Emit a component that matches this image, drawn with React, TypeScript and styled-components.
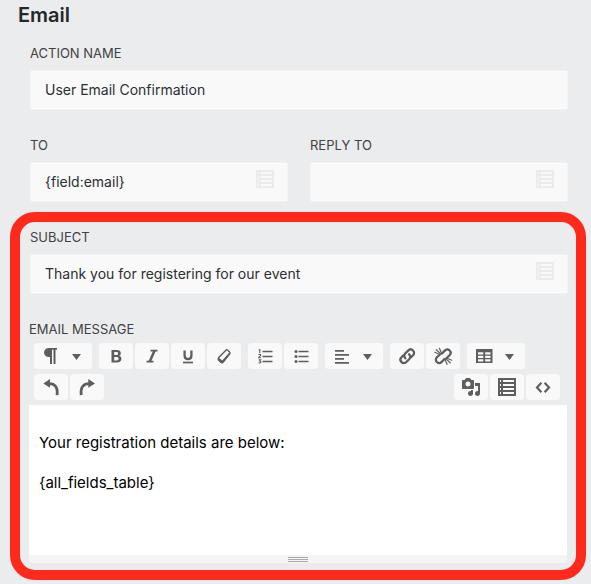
import React from 'react';
import styled, { createGlobalStyle } from 'styled-components';

const GlobalStyle = createGlobalStyle`
  *, *::before, *::after { box-sizing: border-box; }
  body {
    margin: 0;
    background: #ebecee;
    color: #2b2f33;
    font-family: Inter, "Liberation Sans", sans-serif;
  }
`;

const Page = styled.main`
  padding: 3px 5px 4px 10px;
`;

const Title = styled.h1`
  margin: 0 0 17px 8px;
  font-size: 20px;
  line-height: 24px;
  font-weight: 600;
  color: #23282d;
`;

const Fields = styled.div`
  display: grid;
  grid-template-columns: 1fr 1fr;
  gap: 26px 22px;
  margin: 0 18px 10px 20px;
`;

const Field = styled.div<{ $wide?: boolean }>`
  display: flex;
  flex-direction: column;
  gap: 8px;
  min-width: 0;
  grid-column: ${(p) => (p.$wide ? '1 / -1' : 'auto')};
`;

const Label = styled.label`
  font-size: 13px;
  line-height: 18px;
  color: #424242;
`;

const InputBox = styled.div`
  display: flex;
  height: 40px;
  padding: 0 13px 2px 14px;
  background: #f9f9f9;
  border: 1px solid #f4f4f5;
  border-radius: 2px;
`;

const TextInput = styled.input`
  flex: 1;
  min-width: 0;
  padding: 0;
  border: 0;
  outline: 0;
  background: transparent;
  color: #2b2f33;
  font: inherit;
  font-size: 14px;
`;

const MergeTagButton = styled.button`
  display: flex;
  align-self: flex-start;
  margin-top: 7px;
  padding: 0;
  border: 0;
  background: transparent;
  color: #ebebeb;
`;

const Highlight = styled.section`
  padding: 6px 8px 7px 9px;
  border: 10px solid #ff2a1c;
  border-radius: 25px;
`;

const SubjectField = styled(Field)`
  margin: 0 0 26px 1px;
`;

const MessageLabel = styled(Label)`
  display: block;
  margin-bottom: 5px;
`;

const Toolbar = styled.div`
  display: flex;
  flex-wrap: wrap;
  gap: 5px 7px;
  padding: 0 8px 5px 5px;
`;

const Group = styled.div<{ $end?: boolean }>`
  display: flex;
  gap: 2px;
  margin-left: ${(p) => (p.$end ? 'auto' : '0')};
`;

const ToolButton = styled.button<{ $menu?: boolean }>`
  display: flex;
  align-items: center;
  justify-content: center;
  gap: 5px;
  width: ${(p) => (p.$menu ? '58px' : '34px')};
  height: 26px;
  padding: 0;
  border: 0;
  border-radius: 4px;
  background: #f9f9f9;
  color: #5e5e5e;
`;

const Icon = styled.svg`
  display: block;
  flex: none;
  fill: none;
  stroke: none;
`;

const Editor = styled.div`
  margin-right: 1px;
`;

const Message = styled.div`
  min-height: 150px;
  padding: 28px 10px 10px;
  background: #fff;
  color: #000;
  font-size: 15px;
  line-height: 20px;
  outline: 0;
`;

const Paragraph = styled.p`
  margin: 0 0 20px;
`;

const ResizeBar = styled.div`
  display: flex;
  flex-direction: column;
  align-items: center;
  gap: 1px;
  height: 8px;
  padding-top: 2px;
  background: #f5f5f5;
  border-radius: 0 0 4px 4px;
`;

const GripLine = styled.span`
  width: 20px;
  height: 1px;
  background: #a9a9a9;
`;

const ListIcon = () => (
  <Icon width="18" height="18" viewBox="0 0 18 18" shapeRendering="crispEdges">
    <path fill="currentColor" fillRule="evenodd" d="M0 0h18v18H0zM2 2v2h1V2zM5 2v2h11V2zM2 6v2h1V6zM5 6v2h11V6zM2 10v2h1v-2zM5 10v2h11v-2zM2 14v2h1v-2zM5 14v2h11v-2z" />
  </Icon>
);

const Caret = () => (
  <Icon width="20" height="20" viewBox="0 0 20 20">
    <path fill="currentColor" d="M6 8h9l-4.500 6z" />
  </Icon>
);

const icons: Record<string, React.ReactNode> = {
  paragraph: <path fill="currentColor" d="M16 2v1.700h-1.500V18h-2V3.700H11V18H9v-7H8C5 11 3 9 3 6.500S5 2 8 2z" />,
  bold: <path fill="currentColor" fillRule="evenodd" d="M5.500 4h5.200c2.600 0 4.100 1.200 4.100 3.200 0 1.300-.7 2.200-1.800 2.600 1.500.4 2.400 1.500 2.400 3 0 2.400-1.700 3.700-4.500 3.700H5.500zM8.200 6.100v2.900h2c1.200 0 1.900-.5 1.900-1.500s-.7-1.400-1.900-1.400zM8.200 11v3.400h2.300c1.400 0 2.100-.6 2.100-1.700S11.800 11 10.500 11z" />,
  italic: (
    <g stroke="currentColor" strokeWidth="1.700">
      <path d="M8.500 4.600h7M4.500 15.600h7" />
      <path strokeWidth="2.500" d="M12.600 4.500l-4.800 11" />
    </g>
  ),
  underline: (
    <g stroke="currentColor">
      <path strokeWidth="2.300" d="M6.600 4.500v5c0 2.400 1.100 3.600 3.400 3.600s3.400-1.200 3.400-3.600v-5" />
      <path strokeWidth="1.700" d="M5 16.500h10" />
    </g>
  ),
  eraser: (
    <g stroke="currentColor" strokeLinejoin="round">
      <path strokeWidth="1.400" d="M11.700 4.400q1-1 2-.2l1.700 1.500q1 1 .2 2l-6.400 7.600q-1 1-2 .2l-2.300-2q-1-1-.2-2z" />
      <path fill="currentColor" strokeWidth="1" d="M4.400 12.200l4 2.700 7.200-8 .4 1-6.700 8.600q-1.200 1.100-2.400.2L4.500 14.600q-1-1-.1-2.400z" />
    </g>
  ),
  ordered: (
    <g stroke="currentColor">
      <path strokeWidth="1.400" d="M7.500 5.500h10M7.500 10.500h10M7.500 15.500h10" />
      <path strokeWidth="1.100" d="M3.800 4.200l1-.6v3.500M3.600 8.900c.5-1 2.300-.8 2.100.4-.1.800-1.300 1.100-2 2.400h2.200M3.700 13.700h1.900l-.9 1.200c1.800.1 1.500 2.200-.1 2.100l-1-.3" />
    </g>
  ),
  unordered: (
    <g stroke="currentColor">
      <path strokeWidth="1.400" d="M7.500 5.500h10M7.500 10.500h10M7.500 15.500h10" />
      <g fill="currentColor" stroke="none">
        <circle cx="5" cy="5.500" r="1.500" />
        <circle cx="5" cy="10.500" r="1.500" />
        <circle cx="5" cy="15.500" r="1.500" />
      </g>
    </g>
  ),
  align: <path fill="currentColor" d="M3 4h9v1.800H3zM3 8h14v1.800H3zM3 12h9v1.800H3zM3 16h14v1.800H3z" />,
  link: (
    <g stroke="currentColor" strokeWidth="2.300" strokeLinecap="round">
      <path d="M8.400 12.300c-1.600-1.400-1.500-3.500 0-5l2.700-2.700c1.500-1.500 3.500-1.500 4.900-.1s1.400 3.400 0 4.800l-1.900 1.900" />
      <path d="M12.100 8.300c1.600 1.400 1.500 3.500 0 5L9.400 16c-1.500 1.500-3.500 1.500-4.900.1s-1.400-3.400 0-4.800l1.900-1.900" />
    </g>
  ),
  unlink: (
    <g stroke="currentColor" strokeLinecap="round">
      <path strokeWidth="2.300" d="M9 7.500l2.800-2.900c1.500-1.500 3.400-1.500 4.800-.1s1.400 3.300 0 4.700l-2.400 2.300M11.500 13l-2.800 2.900c-1.500 1.500-3.400 1.500-4.800.1s-1.400-3.300 0-4.700l2.400-2.300" />
      <path strokeWidth="1.200" d="M1.800 6.300l5.700 2.400M3.300 3.700l4.700 4.400M6.400 2.200L8.500 7M18.700 14.200l-5.700-2.400M17.200 16.800l-4.700-4.400M14.100 18.300L12 13.500" />
    </g>
  ),
  table: <path fill="currentColor" fillRule="evenodd" d="M2 3h16.500v14H2zM4 6.200v2.300h5.300V6.200zM11.200 6.200v2.300h5.300V6.200zM4 9.700V12h5.300V9.700zM11.200 9.700V12h5.300V9.700zM4 13.200v2.300h5.300v-2.300zM11.200 13.200v2.300h5.300v-2.300z" />,
  undo: (
    <g>
      <path fill="currentColor" d="M2.300 6.600L9 2v8.800z" />
      <path stroke="currentColor" strokeWidth="2.800" d="M8 6.700c6.200 0 9 3.800 8.100 11.500" />
    </g>
  ),
  redo: (
    <g>
      <path fill="currentColor" d="M18 6.600L11.300 2v8.800z" />
      <path stroke="currentColor" strokeWidth="2.800" d="M12.300 6.700c-6.200 0-9 3.800-8.100 11.500" />
    </g>
  ),
  media: <path fill="currentColor" d="M13 11V4c0-.55-.45-1-1-1h-1.670L9 1H5L3.670 3H2c-.55 0-1 .45-1 1v7c0 .55.45 1 1 1h10c.55 0 1-.45 1-1zM7 4.500c1.380 0 2.500 1.120 2.500 2.500S8.380 9.500 7 9.500 4.500 8.380 4.500 7 5.620 4.500 7 4.500zM14 6h5v10.500c0 1.380-1.120 2.500-2.500 2.500S14 17.880 14 16.500s1.120-2.500 2.500-2.500c.17 0 .34.020.5.050V9h-3V6zm-4 8.050V13h2v3.500c0 1.380-1.120 2.500-2.500 2.500S7 17.880 7 16.500 8.120 14 9.500 14c.17 0 .34.020.5.050z" />,
  code: <path stroke="currentColor" strokeWidth="2.200" d="M8.400 5.800L4 10.500l4.400 4.700M11.600 5.800l4.400 4.700-4.400 4.700" />,
};

type ToolProps = { name: string; label: string; menu?: boolean };

const Tool = ({ name, label, menu }: ToolProps) => (
  <ToolButton type="button" aria-label={label} aria-haspopup={menu ? 'menu' : undefined} $menu={menu}>
    {name === 'fields' ? (
      <ListIcon />
    ) : (
      <Icon width="20" height="20" viewBox="0 0 20 20">
        {icons[name]}
      </Icon>
    )}
    {menu && <Caret />}
  </ToolButton>
);

type TextFieldProps = { id: string; value: string; tags?: boolean };

const TextField = ({ id, value, tags }: TextFieldProps) => (
  <InputBox>
    <TextInput id={id} type="text" defaultValue={value} />
    {tags && (
      <MergeTagButton type="button" aria-label="Insert merge tag">
        <ListIcon />
      </MergeTagButton>
    )}
  </InputBox>
);

export default function App() {
  return (
    <>
      <GlobalStyle />
      <Page>
        <Title>Email</Title>
        <Fields>
          <Field $wide>
            <Label htmlFor="action-name">ACTION NAME</Label>
            <TextField id="action-name" value="User Email Confirmation" />
          </Field>
          <Field>
            <Label htmlFor="to">TO</Label>
            <TextField id="to" value="{field:email}" tags />
          </Field>
          <Field>
            <Label htmlFor="reply-to">REPLY TO</Label>
            <TextField id="reply-to" value="" tags />
          </Field>
        </Fields>
        <Highlight>
          <SubjectField>
            <Label htmlFor="subject">SUBJECT</Label>
            <TextField id="subject" value="Thank you for registering for our event" tags />
          </SubjectField>
          <MessageLabel as="div" id="message-label">EMAIL MESSAGE</MessageLabel>
          <Toolbar role="toolbar" aria-label="Formatting">
            <Group>
              <Tool name="paragraph" label="Paragraph style" menu />
            </Group>
            <Group>
              <Tool name="bold" label="Bold" />
              <Tool name="italic" label="Italic" />
              <Tool name="underline" label="Underline" />
              <Tool name="eraser" label="Remove formatting" />
            </Group>
            <Group>
              <Tool name="ordered" label="Ordered list" />
              <Tool name="unordered" label="Unordered list" />
            </Group>
            <Group>
              <Tool name="align" label="Alignment" menu />
            </Group>
            <Group>
              <Tool name="link" label="Link" />
              <Tool name="unlink" label="Unlink" />
            </Group>
            <Group>
              <Tool name="table" label="Table" menu />
            </Group>
            <Group>
              <Tool name="undo" label="Undo" />
              <Tool name="redo" label="Redo" />
            </Group>
            <Group $end>
              <Tool name="media" label="Insert media" />
              <Tool name="fields" label="Insert merge tag" />
              <Tool name="code" label="Code view" />
            </Group>
          </Toolbar>
          <Editor>
            <Message role="textbox" aria-multiline="true" aria-labelledby="message-label" contentEditable suppressContentEditableWarning spellCheck={false}>
              <Paragraph>Your registration details are below:</Paragraph>
              <Paragraph>{'{all_fields_table}'}</Paragraph>
            </Message>
            <ResizeBar>
              <GripLine />
              <GripLine />
              <GripLine />
            </ResizeBar>
          </Editor>
        </Highlight>
      </Page>
    </>
  );
}
